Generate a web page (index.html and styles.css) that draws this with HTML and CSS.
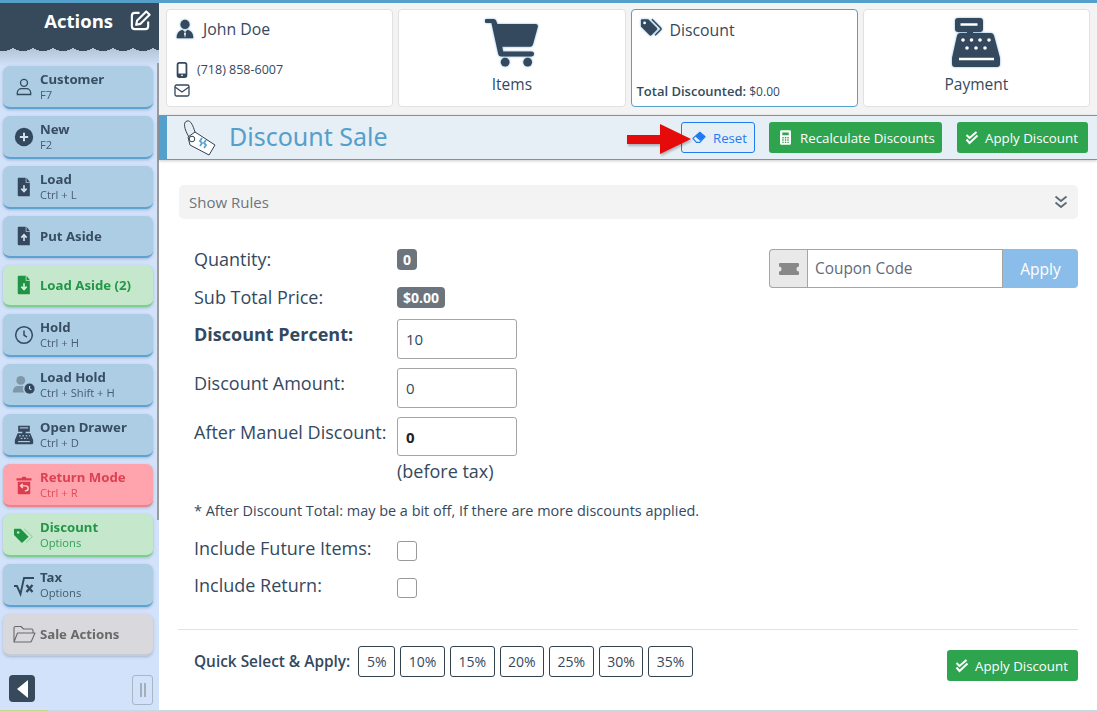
FILE: index.html
```html
<!DOCTYPE html>
<html lang="en">
<head>
<meta charset="utf-8">
<title>Discount Sale</title>
<link rel="stylesheet" href="styles.css">
</head>
<body>
<div class="app">
  <aside class="sidebar">
    <div class="side-head">
      <span class="side-title">Actions</span>
      <svg class="side-edit" viewBox="0 0 24 24"><path d="M11 4H6a3 3 0 0 0-3 3v11a3 3 0 0 0 3 3h11a3 3 0 0 0 3-3v-5" fill="none" stroke="#fff" stroke-width="2.2"/><path d="M18 2.500l3.500 3.500L12 15.500l-4.500 1 1-4.500z" fill="none" stroke="#fff" stroke-width="2.200" stroke-linejoin="round"/></svg>
    </div>
    <div class="side-list">
      <a class="act blue"><svg class="act-ic" viewBox="0 0 24 24"><circle cx="12" cy="7" r="4.200" fill="none" stroke="#34495e" stroke-width="1.600"/><path d="M4 21v-2a5 5 0 0 1 5-5h6a5 5 0 0 1 5 5v2z" fill="none" stroke="#34495e" stroke-width="1.600"/></svg><span class="act-txt"><b>Customer</b><small>F7</small></span></a>
      <a class="act blue"><svg class="act-ic" viewBox="0 0 24 24"><circle cx="12" cy="12" r="11" fill="#34495e"/><path d="M12 7v10M7 12h10" stroke="#cfe0ee" stroke-width="2.400"/></svg><span class="act-txt"><b>New</b><small>F2</small></span></a>
      <a class="act blue"><svg class="act-ic" viewBox="0 0 24 24"><path d="M5.500 1h8.500v6h5v16h-13.500a1 1 0 0 1-1-1V2a1 1 0 0 1 1-1zM15 1l4 5h-4z" fill="#34495e"/><path d="M12 10v6M8.800 14l3.200 3.500 3.200-3.500" fill="none" stroke="#cfe0ee" stroke-width="2"/></svg><span class="act-txt"><b>Load</b><small>Ctrl + L</small></span></a>
      <a class="act blue one"><svg class="act-ic" viewBox="0 0 24 24"><path d="M5.500 1h8.500v6h5v16h-13.500a1 1 0 0 1-1-1V2a1 1 0 0 1 1-1zM15 1l4 5h-4z" fill="#34495e"/><path d="M12 18v-6M8.800 14l3.200-3.500 3.200 3.500" fill="none" stroke="#cfe0ee" stroke-width="2"/></svg><span class="act-txt"><b>Put Aside</b></span></a>
      <a class="act green one"><svg class="act-ic" viewBox="0 0 24 24"><path d="M5.500 1h8.500v6h5v16h-13.500a1 1 0 0 1-1-1V2a1 1 0 0 1 1-1zM15 1l4 5h-4z" fill="#1e9444"/><path d="M12 10v6M8.800 14l3.200 3.500 3.200-3.500" fill="none" stroke="#d5eed9" stroke-width="2"/></svg><span class="act-txt"><b>Load Aside (2)</b></span></a>
      <a class="act blue"><svg class="act-ic" viewBox="0 0 24 24"><circle cx="12" cy="12" r="10" fill="none" stroke="#34495e" stroke-width="1.800"/><path d="M12 6.500V12l3.500 2.500" fill="none" stroke="#34495e" stroke-width="1.800"/></svg><span class="act-txt"><b>Hold</b><small>Ctrl + H</small></span></a>
      <a class="act blue"><svg class="act-ic wide" viewBox="0 0 26 24"><circle cx="9.500" cy="7" r="4.800" fill="#7f97a9"/><path d="M1 20v-1.500a5.500 5.500 0 0 1 5.500-5.500h6a6 6 0 0 0 1 7z" fill="#7f97a9"/><circle cx="19" cy="16" r="5.500" fill="#34495e"/><path d="M19 13v3l2 1.200" fill="none" stroke="#cfe0ee" stroke-width="1.200"/></svg><span class="act-txt"><b>Load Hold</b><small>Ctrl + Shift + H</small></span></a>
      <a class="act blue"><svg class="act-ic" viewBox="0 0 24 24"><path d="M5 1h14v7h-5v2h5.500L23 18v4a1 1 0 0 1-1 1H2a1 1 0 0 1-1-1v-4l3.500-8H10V8H5z" fill="#34495e"/><path d="M7 3.500h10M6 13h2M10 13h2M14 13h2M18 13h1M8 16h2M12 16h2M16 16h1M5 20h14" stroke="#cfe0ee" stroke-width="1.200"/></svg><span class="act-txt"><b>Open Drawer</b><small>Ctrl + D</small></span></a>
      <a class="act red"><svg class="act-ic" viewBox="0 0 24 24"><path d="M3 4h6l1-2h4l1 2h6v2.500H3zM4.500 8h15v14a1 1 0 0 1-1 1h-13a1 1 0 0 1-1-1z" fill="#dc3d4e"/><path d="M8.500 13h5.500a3 3 0 0 1 0 6h-1M10.500 10.500L8 13l2.500 2.500" fill="none" stroke="#ffd0d4" stroke-width="1.700"/></svg><span class="act-txt"><b>Return Mode</b><small>Ctrl + R</small></span></a>
      <a class="act green"><svg class="act-ic" viewBox="0 0 24 24"><path d="M0 5v7l9.500 9.500 8-7.500L8 4.500H.5z" fill="#1e9444"/><circle cx="5" cy="9" r="1.500" fill="#c9e7cd"/><path d="M12 4.500l10 9.500-7.500 7" fill="none" stroke="#8bcb98" stroke-width="1.200"/></svg><span class="act-txt"><b>Discount</b><small>Options</small></span></a>
      <a class="act blue"><svg class="act-ic wide" viewBox="0 0 24 24"><path d="M2 13h3l3.500 8L12 5h10" fill="none" stroke="#34495e" stroke-width="1.900"/><path d="M14.500 12l6 7M20.500 12l-6 7" stroke="#34495e" stroke-width="2.300"/></svg><span class="act-txt"><b>Tax</b><small>Options</small></span></a>
      <a class="act gray one"><svg class="act-ic wide" viewBox="0 0 24 24"><path d="M2 20V6a1.500 1.500 0 0 1 1.500-1.500H9l2.500 2.500h8A1.500 1.500 0 0 1 21 8.500V11M2 20l3.500-9H23l-3.500 8a1.500 1.500 0 0 1-1.300 1z" fill="none" stroke="#6a6a6a" stroke-width="1.100" stroke-linejoin="round"/></svg><span class="act-txt"><b>Sale Actions</b></span></a>
    </div>
    <div class="side-foot">
      <button class="collapse" type="button"><span class="tri"></span></button>
      <button class="handle" type="button"><span class="bars"></span></button>
    </div>
    <span class="side-scroll"></span>
    <span class="side-progress"></span>
  </aside>

  <main class="main">
    <nav class="tabs">
      <div class="tab tab-cust">
        <div class="tab-row">
          <svg class="ic-person glow" viewBox="0 0 24 24"><circle cx="12" cy="6.500" r="5.500" fill="#34495e"/><path d="M2 23c0-6 3-9 7-10l3 3 3-3c4 1 7 4 7 10z" fill="#34495e"/><path d="M12 15.500l1.200 2-1.200 5-1.200-5z" fill="#fff"/></svg>
          <span class="tab-name">John Doe</span>
        </div>
        <div class="tab-phone">
          <svg class="ic-phone" viewBox="0 0 12 18"><rect x="1" y="1" width="10" height="16" rx="2" fill="none" stroke="#34495e" stroke-width="2"/><rect x="1" y="13" width="10" height="4" fill="#34495e"/><circle cx="6" cy="15" r="1" fill="#fff"/></svg>
          <span>(718) 858-6007</span>
        </div>
        <svg class="ic-mail" viewBox="0 0 16 13"><rect x="1" y="1" width="14" height="11" rx="1.500" fill="none" stroke="#34495e" stroke-width="1.300"/><path d="M1 3l7 5 7-5" fill="none" stroke="#34495e" stroke-width="1.300"/></svg>
      </div>
      <div class="tab tab-center">
        <svg class="ic-big glow" viewBox="0 0 54 50"><path d="M1 1h7a3 3 0 0 1 3 2l1 3h39a2.500 2.500 0 0 1 2.400 3l-5 18a3 3 0 0 1-3 2.300H17l1 5h29a2.500 2.500 0 0 1 0 5H16a3 3 0 0 1-3-2.400L6 5H1a2 2 0 0 1 0-4z" fill="#34495e"/><circle cx="20" cy="45" r="4.500" fill="#34495e"/><circle cx="43" cy="45" r="4.500" fill="#34495e"/></svg>
        <span class="tab-label">Items</span>
      </div>
      <div class="tab tab-disc">
        <div class="tab-row">
          <svg class="ic-tags glow" viewBox="0 0 24 20"><path d="M1 2v7l9.500 9.500a1.500 1.500 0 0 0 2 0l6-6a1.500 1.500 0 0 0 0-2L9 1H2a1 1 0 0 0-1 1z" fill="#34495e"/><circle cx="5" cy="5" r="1.500" fill="#fff"/><path d="M13 1l9.500 9.500a1.500 1.500 0 0 1 0 2L16.500 18.500" fill="none" stroke="#34495e" stroke-width="1.600"/></svg>
          <span class="tab-name">Discount</span>
        </div>
        <div class="tab-total"><b>Total Discounted:</b> $0.00</div>
      </div>
      <div class="tab tab-center">
        <svg class="ic-big ic-reg glow" viewBox="0 0 48 49"><path d="M6 0h22a3 3 0 0 1 3 3v8a3 3 0 0 1-3 3h-7v1h18a3 3 0 0 1 3 2.500L48 40v6a3 3 0 0 1-3 3H3a3 3 0 0 1-3-3v-6L5 17.500A3 3 0 0 1 8 15h7v-1H6a3 3 0 0 1-3-3V3a3 3 0 0 1 3-3z" fill="#34495e"/><path d="M8.500 6.500h17M7 41h35" stroke="#fff" stroke-width="2.400"/><g fill="#fff"><circle cx="11" cy="22" r="1.800"/><circle cx="19.500" cy="22" r="1.800"/><circle cx="28" cy="22" r="1.800"/><circle cx="37" cy="22" r="1.800"/><circle cx="15" cy="30" r="1.800"/><circle cx="24" cy="30" r="1.800"/><circle cx="33" cy="30" r="1.800"/></g></svg>
        <span class="tab-label">Payment</span>
      </div>
    </nav>

    <header class="bar">
      <svg class="bar-tag" viewBox="0 0 34 36"><path d="M6 17l7-5 20 13-6 10-19-10z" fill="#fff" stroke="#33424f" stroke-width="1"/><path d="M7 17C2 9 1 2 5 1s6 5 8 11" fill="none" stroke="#33424f" stroke-width="1"/><circle cx="10" cy="19" r="2.800" fill="none" stroke="#33424f" stroke-width="1"/><path d="M20 18l-2 3 2 2-2 3M24 20l-2 3 2 2-2 3" fill="none" stroke="#5aa3cf" stroke-width="1.800"/></svg>
      <h1 class="bar-title">Discount Sale</h1>
      <div class="bar-actions">
        <div class="reset-wrap">
          <button class="btn btn-reset" type="button"><svg class="ic-eraser" viewBox="0 0 16 14"><path d="M9 1l6 5-6 6.500H5L1 8z" fill="#e6eef6" stroke="#1e7bf2" stroke-width="1.300" stroke-linejoin="round"/><path d="M9 1l6 5-5.500 5L3.500 5.500z" fill="#1e7bf2"/></svg>Reset</button>
          <svg class="red-arrow" viewBox="0 0 64 30"><path d="M0 11h33V0l31 15-31 15V20H0z" fill="#e60b0b"/></svg>
        </div>
        <button class="btn btn-green btn-recalc" type="button"><svg class="ic-calc" viewBox="0 0 12 16"><rect width="12" height="16" rx="1.500" fill="#fff"/><path d="M2.500 2.500h7v3h-7zM2.500 7.500h1.500v1.500H2.500zM5.300 7.500h1.500v1.500H5.300zM8 7.500h1.500v1.500H8zM2.500 10h1.500v1.500H2.500zM5.300 10h1.500v1.500H5.300zM8 10h1.500v1.500H8zM2.500 12.500h1.500V14H2.500zM5.300 12.500h1.500V14H5.300zM8 12.500h1.500V14H8z" fill="#2ea44f"/></svg>Recalculate Discounts</button>
        <button class="btn btn-green btn-apply" type="button"><svg class="ic-check" viewBox="0 0 14 14"><path d="M1.500 4l3 3 7-6M1.500 8.500l3 3.500 8-7.500" fill="none" stroke="#fff" stroke-width="2"/></svg>Apply Discount</button>
      </div>
    </header>

    <section class="content">
      <div class="rules">
        <span>Show Rules</span>
        <svg class="ic-dbl" viewBox="0 0 14 14"><path d="M1.500 1.500L7 6l5.500-4.500M1.500 7.500L7 12l5.500-4.500" fill="none" stroke="#5c6b78" stroke-width="1.800"/></svg>
      </div>

      <div class="form-top">
        <div class="form">
          <div class="row row-qty"><span class="lbl">Quantity:</span><span class="badge">0</span></div>
          <div class="row row-sub"><span class="lbl">Sub Total Price:</span><span class="badge">$0.00</span></div>
          <div class="row row-in"><span class="lbl strong">Discount Percent:</span><input class="field" type="text" value="10"></div>
          <div class="row row-in"><span class="lbl">Discount Amount:</span><input class="field" type="text" value="0"></div>
          <div class="row row-in row-last"><span class="lbl">After Manuel Discount:</span><input class="field field-b" type="text" value="0"></div>
          <div class="row row-tax"><span class="lbl"></span><span class="before">(before tax)</span></div>
        </div>
        <div class="coupon">
          <span class="coupon-ic"><svg class="ic-ticket" viewBox="0 0 20 12"><path d="M1 0h18a1 1 0 0 1 1 1v2.500a2.500 2.500 0 0 0 0 5V11a1 1 0 0 1-1 1H1a1 1 0 0 1-1-1V8.500a2.500 2.500 0 0 0 0-5V1a1 1 0 0 1 1-1z" fill="#888"/></svg></span>
          <input class="coupon-in" type="text" placeholder="Coupon Code">
          <button class="coupon-btn" type="button">Apply</button>
        </div>
      </div>

      <p class="note">* After Discount Total: may be a bit off, If there are more discounts applied.</p>

      <div class="row row-chk"><span class="lbl">Include Future Items:</span><span class="chk"></span></div>
      <div class="row row-chk"><span class="lbl">Include Return:</span><span class="chk"></span></div>

      <hr class="rule">

      <div class="quick">
        <b class="quick-lbl">Quick Select &amp; Apply:</b>
        <span class="pct p5">5%</span>
        <span class="pct">10%</span>
        <span class="pct">15%</span>
        <span class="pct">20%</span>
        <span class="pct">25%</span>
        <span class="pct">30%</span>
        <span class="pct">35%</span>
        <button class="btn btn-green btn-apply quick-apply" type="button"><svg class="ic-check" viewBox="0 0 14 14"><path d="M1.500 4l3 3 7-6M1.500 8.500l3 3.500 8-7.500" fill="none" stroke="#fff" stroke-width="2"/></svg>Apply Discount</button>
      </div>
    </section>
  </main>
</div>
</body>
</html>
```
FILE: styles.css
```css
* { box-sizing: border-box; }
html, body { margin: 0; height: 100%; overflow: hidden; }
body { font-family: "Open Sans", "Noto Sans", sans-serif; color: #34495e; background: #fff; }

.app { display: flex; width: 1097px; height: 711px; border-top: 3px solid #559fcb; border-bottom: 1px solid #c5dbe6; }

/* Sidebar */
.sidebar { position: relative; flex: 0 0 159px; display: flex; flex-direction: column; background: linear-gradient(#b4c3d3 45px, #d2e2fb 64px); }
.side-head { height: 43px; background: #364a5c; display: flex; align-items: flex-start; justify-content: flex-end; gap: 16px; padding: 5px 7px 0 0; position: relative; }
.side-head::after { content: ""; position: absolute; left: 0; right: 0; top: 43px; height: 5px; background: radial-gradient(ellipse 10.500px 5px at 50% 0, #364a5c 96%, transparent 100%) 13px 0 / 20px 5px repeat-x; }
.side-title { font-size: 18.500px; line-height: 26px; font-weight: 700; color: #fff; }
.side-edit { width: 23px; height: 23px; margin-top: 1px; }
.side-list { display: flex; flex-direction: column; gap: 7px; padding: 20px 6px 0 3px; }
.act { height: 43px; display: flex; align-items: center; border-radius: 7px; border-bottom: 2px solid #5da3d2; box-shadow: 0 1px 3px rgba(60,80,110,.3); padding: 1px 0 0 10px; }
.act.one { height: 42px; padding: 0 0 1px 10px; }
.act.blue { background: #accde3; color: #34495e; }
.act.green { background: #c5e7cb; color: #1e9444; border-bottom-color: #7ad08e; }
.act.red { background: #ffa4ad; color: #dc3d4e; border-bottom-color: #e9848e; }
.act.gray { background: #d9d9dd; color: #666; border-bottom-color: #c6ccd6; }
.act-ic { flex: 0 0 20px; width: 20px; height: 20px; margin: 0 6px 0 1px; }
.act-ic.wide { flex-basis: 24px; width: 24px; height: 24px; margin: 0 4px 0 -1px; }
.act-txt { display: flex; flex-direction: column; white-space: nowrap; }
.act-txt b { font-family: "Noto Sans", sans-serif; font-size: 13.200px; line-height: 16px; font-weight: 700; opacity: .97; }
.act-txt small { font-size: 11.200px; line-height: 16px; opacity: .85; }
.side-foot { display: flex; justify-content: space-between; align-items: flex-start; padding: 19px 6px 0 9px; }
.collapse { width: 26px; height: 27px; padding: 0; border: 0; border-radius: 4px; background: #364a5c; display: flex; align-items: center; justify-content: center; }
.tri { width: 0; height: 0; border: 9px solid transparent; border-left: 0; border-right: 11px solid #fff; }
.handle { width: 21px; height: 30px; padding: 0; background: #d2e2fb; border: 1px solid #a9b6c6; border-radius: 3px; display: flex; align-items: center; justify-content: center; }
.bars { width: 6px; height: 14px; border-left: 2px solid #a4adb9; border-right: 2px solid #a4adb9; }
.side-scroll { position: absolute; right: 0; top: 60px; width: 2px; height: 457px; background: #9a9a9a; }
.side-progress { position: absolute; left: 0; bottom: -1px; width: 48px; height: 1px; background: #c8d68a; }

/* Main */
.main { flex: 1; min-width: 0; display: flex; flex-direction: column; background: #f3f3f3; }
.tabs { height: 112px; display: grid; grid-template-columns: repeat(4, 1fr); gap: 5px; padding: 6px 7px 0; }
.tab { height: 98px; min-width: 0; background: #fff; border: 1px solid #e1e1e1; border-radius: 4px; }
.tab-cust { padding: 8px 5px 0 8px; }
.tab-row { display: flex; align-items: center; }
.glow { filter: drop-shadow(0 0 1px #7fb3d9); }
.ic-person { width: 20px; height: 22px; margin-right: 8px; }
.tab-name { font-size: 15.800px; line-height: 22px; }
.tab-phone { display: flex; align-items: center; margin: 21px 0 0 1px; font-size: 12.500px; line-height: 18px; }
.ic-phone { width: 12px; height: 16px; margin-right: 9px; }
.ic-mail { display: block; width: 16px; height: 13px; margin: 5px 0 0 -1px; }
.tab-center { display: flex; flex-direction: column; align-items: center; padding-top: 8px; }
.ic-big { width: 54px; height: 49px; }
.ic-reg { width: 48px; }
.tab-label { font-size: 15.500px; line-height: 20px; margin-top: 7px; }
.tab-disc { display: flex; flex-direction: column; justify-content: space-between; padding: 8px 5px 5px 5px; border-color: #559fcb; }
.tab-disc .tab-row { padding-left: 3px; }
.ic-tags { width: 22px; height: 19px; margin-right: 8px; margin-bottom: 4px; }
.tab-total { font-size: 12px; line-height: 18px; }
.tab-total b { font-size: 13px; font-weight: 600; }

.bar { height: 45px; display: flex; align-items: center; background: #e6eef6; border-top: 1px solid #559fcb; border-bottom: 1px solid #559fcb; border-left: 8px solid #559fcb; box-shadow: 0 1px 3px rgba(0,0,0,.2); position: relative; padding: 0 9px 0 15px; }
.bar-tag { width: 34px; height: 36px; flex: none; }
.bar-title { margin: -4px 0 0 13px; font-size: 25px; line-height: 30px; font-weight: 400; color: #559fcb; font-family: "Noto Sans", sans-serif; }
.bar-actions { margin-left: auto; display: flex; align-items: center; gap: 14px; }
.reset-wrap { position: relative; display: flex; }
.red-arrow { position: absolute; left: -54px; top: 2px; width: 64px; height: 30px; filter: drop-shadow(1px 2px 1px rgba(0,0,0,.25)); }
.btn { display: inline-flex; align-items: center; height: 31px; border-radius: 3px; font-family: inherit; font-size: 13.300px; padding: 0; white-space: nowrap; }
.btn-reset { width: 74px; background: transparent; border: 1px solid #1e7bf2; color: #1e7bf2; padding-left: 10px; font-size: 13.200px; }
.ic-eraser { width: 14px; height: 13px; margin-right: 7px; }
.btn-green { background: #2ea44f; border: 0; color: #fff; }
.btn-recalc { width: 173px; padding-left: 11px; margin-right: 1px; }
.ic-calc { width: 11px; height: 15px; margin-right: 9px; }
.btn-apply { width: 131px; padding-left: 8px; }
.ic-check { width: 14px; height: 14px; margin-right: 6px; }

.content { flex: 1; background: #fff; padding: 25px 19px 0 20px; }
.rules { height: 34px; background: #f3f3f3; border-radius: 5px; display: flex; align-items: center; justify-content: space-between; padding: 0 10px 0 10px; font-size: 15px; color: #6c757d; }
.ic-dbl { width: 14px; height: 14px; }
.form-top { display: flex; justify-content: space-between; align-items: flex-start; padding-top: 30px; }
.form { padding-left: 15px; }
.coupon { display: flex; width: 309px; height: 39px; }
.coupon-ic { width: 38px; background: #e9e9e9; border: 1px solid #a5a5a5; border-right: 0; border-radius: 4px 0 0 4px; display: flex; align-items: center; justify-content: center; }
.ic-ticket { width: 20px; height: 12px; }
.coupon-in { width: 196px; min-width: 0; height: 39px; border: 1px solid #a5a5a5; padding: 0 7px; font: 15.400px "Open Sans", sans-serif; color: #34495e; outline: 0; }
.coupon-in::placeholder { color: #5f6b76; opacity: 1; }
.coupon-btn { flex: 1; border: 0; background: #8bbdeb; color: #fff; border-radius: 0 4px 4px 0; font: 15.500px "Open Sans", sans-serif; padding: 0; }

.row { display: flex; align-items: flex-start; font-size: 18px; }
.lbl { flex: 0 0 203px; white-space: nowrap; line-height: 22px; }
.lbl.strong { font-weight: 700; }
.row-qty { height: 38px; }
.row-sub { height: 32px; }
.row-qty .lbl, .row-sub .lbl { margin-top: -1px; }
.row-in { height: 49px; }
.row-in .lbl { padding-top: 4px; }
.row-last { height: 42px; }
.badge { display: inline-block; height: 21px; line-height: 21px; padding: 0 6px; background: #6c757d; color: #fff; border-radius: 4px; font-size: 14px; font-weight: 700; }
.field { width: 120px; height: 40px; border: 1px solid #a5a5a5; border-radius: 3px; padding: 0 8px; font: 15px "Open Sans", sans-serif; color: #34495e; outline: 0; }
.field-b { font-weight: 700; height: 39px; color: #222; }
.before { line-height: 24px; }
.row-tax { height: 24px; }

.note { margin: 19px 0 0 15px; font-size: 14.450px; line-height: 18px; }
.row-chk { padding-left: 15px; height: 37px; }
.note + .row-chk { margin-top: 17px; }
.chk { width: 20px; height: 20px; border: 1px solid #9a9a9a; border-radius: 3px; margin-top: 4px; background: #fff; }
.rule { border: 0; border-top: 1px solid #e3e3e3; margin: 18px 0 0 -1px; }

.quick { display: flex; align-items: flex-start; padding: 16px 0 0 15px; gap: 5px; }
.quick-lbl { font-size: 15.400px; line-height: 31px; font-weight: 600; margin-right: 3px; }
.pct { height: 31px; width: 44.600px; border: 1px solid #33424f; border-radius: 3px; display: flex; align-items: center; justify-content: center; font-size: 14px; }
.pct.p5 { width: 37px; }
.quick-apply { margin-left: auto; margin-top: 4px; }
```
